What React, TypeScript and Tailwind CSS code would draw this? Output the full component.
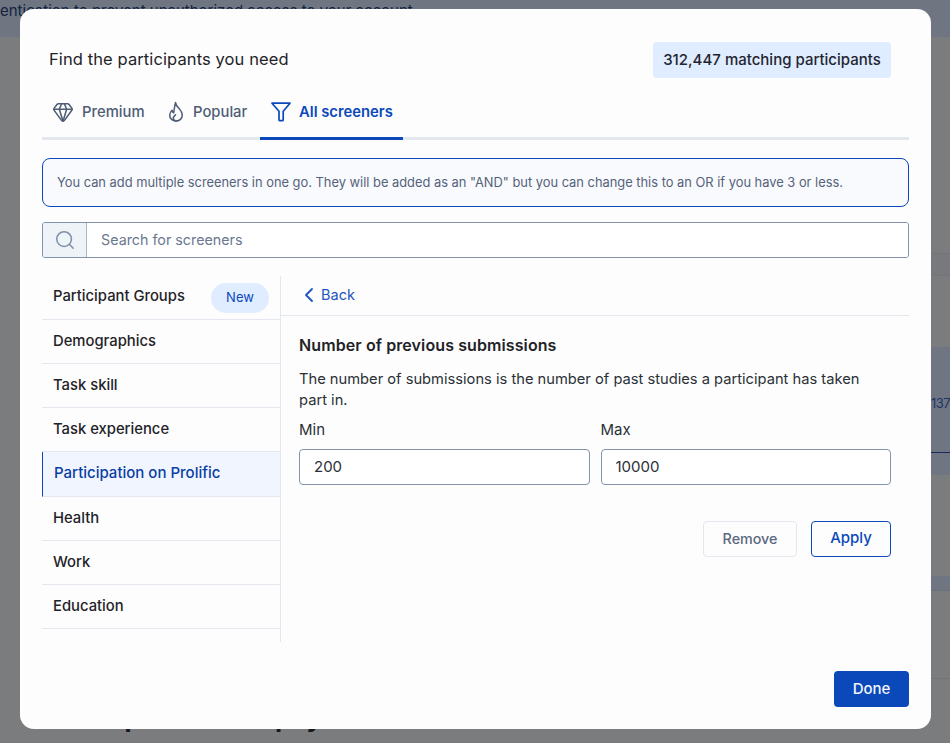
import { ChevronLeft, Gem, Search } from 'lucide-react'

const groups = ['Demographics', 'Task skill', 'Task experience']
const groupsAfter = ['Health', 'Work', 'Education']

function FlameIcon({ className }: { className?: string }) {
  return (
    <svg viewBox="0 0 20 24" fill="none" stroke="currentColor" strokeWidth="1.7" strokeLinecap="round" strokeLinejoin="round" className={className}>
      <path d="M9.500 1.500c.4 3.500 2.600 5 4.500 7.300 1.700 2 3 4 3 6.600 0 3.900-3.100 6.600-7 6.600s-7-2.700-7-6.400c0-2.300 1-4 2.600-5.600.2 1.500.8 2.400 1.800 3C8 10.500 8.300 5.500 9.500 1.500Z" />
      <path d="M10.500 22c-2.100 0-3.600-1.400-3.600-3.200 0-1.600 1.200-2.500 2.600-3.800" />
    </svg>
  )
}

function FunnelIcon({ className }: { className?: string }) {
  return (
    <svg viewBox="0 0 20 20" fill="none" stroke="currentColor" strokeWidth="1.7" strokeLinecap="round" strokeLinejoin="round" className={className}>
      <path d="M1 1.200h18l-6.800 8v8.500c0 .6-.5 1-1 1H9c-.6 0-1-.4-1-1V9.200L1 1.200Z" />
    </svg>
  )
}

export default function App() {
  return (
    <div className="relative h-[743px] w-[950px] overflow-hidden bg-[#7b7c7e] font-['Inter',sans-serif]">
      {/* page behind the dialog, dimmed */}
      <div className="h-[37px] bg-[#6f7682] text-[15px] leading-[21px] whitespace-nowrap text-[#14233f]">
        entication to prevent unauthorized access to your account.
      </div>
      <div className="mt-[216px] ml-[40px] h-[23px] border-y border-[#74757a] bg-[#78797c]" />
      <div className="mt-[71px] ml-[40px] h-[128px] bg-[#6f7682] text-[13px] tracking-[-0.5px] text-[#1c3468]">
        <div className="h-[46px]" />
        <div className="h-[60px] border-b border-[#172a5c] pl-[891px] leading-[20px] whitespace-nowrap">137</div>
      </div>
      <div className="mt-[101px] ml-[40px] h-[15px] border-b border-[#6b717a] bg-[#6f7682]" />
      <div className="mt-[87px] ml-[40px] border-t border-[#727375]" />
      <div className="mt-[22px] pl-[60px] text-[26px] leading-[34px] font-bold whitespace-nowrap text-[#14181f]">Set up what is to pay</div>

      <div className="absolute top-[9px] left-[20px] flex h-[720px] w-[911px] flex-col rounded-[14px] bg-[#fdfdfd] px-[22px]">
        <div className="mt-[33px] flex h-[36px] items-center justify-between pr-[18px] pl-[7px]">
          <h2 className="-mt-[1px] text-[16.5px] tracking-[0.1px] text-[#1f2328]">Find the participants you need</h2>
          <div className="flex h-[36px] w-[238px] items-center justify-center rounded-[4px] bg-[#e0ecff] text-[15px] font-medium text-[#1f2630]">
            312,447 matching participants
          </div>
        </div>

        <div className="mt-[17px] flex h-[45px] border-b-[3px] border-[#e3e8ef] text-[14.8px] font-medium">
          <div className="flex w-[108px] items-center gap-[8px] pb-[8px] pl-[10px] text-[#4f5d75]">
            <Gem className="h-[22px] w-[22px]" strokeWidth={1.7} />
            Premium
          </div>
          <div className="flex w-[110px] items-center gap-[8px] pb-[8px] pl-[17px] text-[#4f5d75]">
            <FlameIcon className="h-[22px] w-[18px]" />
            Popular
          </div>
          <div className="-mb-[3px] flex w-[143px] items-center gap-[8px] border-b-[3px] border-[#0b49bb] pb-[8px] pl-[11px] font-semibold text-[#0b49bb]">
            <FunnelIcon className="h-[20px] w-[20px]" />
            All screeners
          </div>
        </div>

        <div className="mt-[18px] flex h-[49px] items-center rounded-[8px] border border-[#0b49bb] bg-[#f8fafd] pl-[14px] text-[12.86px] text-[#56627a]">
          You can add multiple screeners in one go. They will be added as an "AND" but you can change this to an OR if you have 3 or less.
        </div>

        <div className="mt-[15px] flex h-[36px] overflow-hidden rounded-[3px] border border-[#8493ad]">
          <div className="flex w-[44px] items-center justify-center border-r border-[#a9b6c9] bg-[#eef3f7] text-[#7f91ab]">
            <Search className="h-[22px] w-[22px]" strokeWidth={1.7} />
          </div>
          <div className="flex flex-1 items-center bg-white pb-[1px] pl-[14px] text-[14.3px] text-[#6a7890]">Search for screeners</div>
        </div>

        <div className="mt-[18px] flex h-[366px]">
          <div className="w-[239px] border-r border-[#e3e8ef] text-[14.8px] font-medium text-[#1f2328]">
            <div className="flex h-[44px] items-center justify-between border-b border-[#e3e8ef] px-[11px]">
              <span className="-mt-[3px]">Participant Groups</span>
              <span className="flex h-[30px] w-[58px] items-center justify-center rounded-full bg-[#e0ecff] text-[13px] font-normal text-[#0b49bb]">New</span>
            </div>
            {groups.map((g) => (
              <div key={g} className="flex h-[44px] items-center border-b border-[#e3e8ef] pb-[1px] pl-[11px]">{g}</div>
            ))}
            <div className="flex h-[45px] items-center border-b border-l border-[#e3e8ef] border-l-[#0b49bb] bg-[#f0f5ff] pb-[2px] pl-[11px] text-[15px] text-[#0b3fa5]">
              Participation on Prolific
            </div>
            {groupsAfter.map((g) => (
              <div key={g} className="flex h-[44px] items-center border-b border-[#e3e8ef] pb-[1px] pl-[11px]">{g}</div>
            ))}
          </div>

          <div className="flex-1">
            <div className="flex h-[40px] items-center border-b border-[#e3e8ef] pb-[2px] pl-[16px] text-[14.5px] text-[#1c55c0]">
              <ChevronLeft className="h-[24px] w-[24px]" strokeWidth={1.8} />
              Back
            </div>
            <div className="px-[18px] pt-[18px]">
              <h3 className="text-[16px] leading-[22px] font-semibold tracking-[0.1px] text-[#1f2328]">Number of previous submissions</h3>
              <p className="mt-[13px] max-w-[570px] text-[14.7px] leading-[21px] text-[#2b3037]">
                The number of submissions is the number of past studies a participant has taken part in.
              </p>
              <div className="mt-[8px] grid grid-cols-2 gap-[11px] text-[15px] text-[#2b3037]">
                <div>
                  <div className="leading-[22px]">Min</div>
                  <div className="mt-[8px] flex h-[36px] items-center rounded-[4px] border border-[#8493ad] bg-white pl-[14px]">200</div>
                </div>
                <div>
                  <div className="leading-[22px]">Max</div>
                  <div className="mt-[8px] flex h-[36px] items-center rounded-[4px] border border-[#8493ad] bg-white pl-[14px]">10000</div>
                </div>
              </div>
              <div className="mt-[36px] flex justify-end gap-[14px] font-medium">
                <button className="h-[36px] w-[94px] rounded-[4px] border border-[#e3e8ef] pb-[1px] text-[14.3px] text-[#5b6880]">Remove</button>
                <button className="h-[36px] w-[80px] rounded-[4px] border border-[#0b49bb] pb-[1px] text-[15px] text-[#0b49bb]">Apply</button>
              </div>
            </div>
          </div>
        </div>

        <div className="mt-[29px] flex justify-end">
          <button className="h-[36px] w-[75px] rounded-[4px] bg-[#0b49bb] text-[15px] font-medium text-[#f2f6ff]">Done</button>
        </div>
      </div>
    </div>
  )
}
